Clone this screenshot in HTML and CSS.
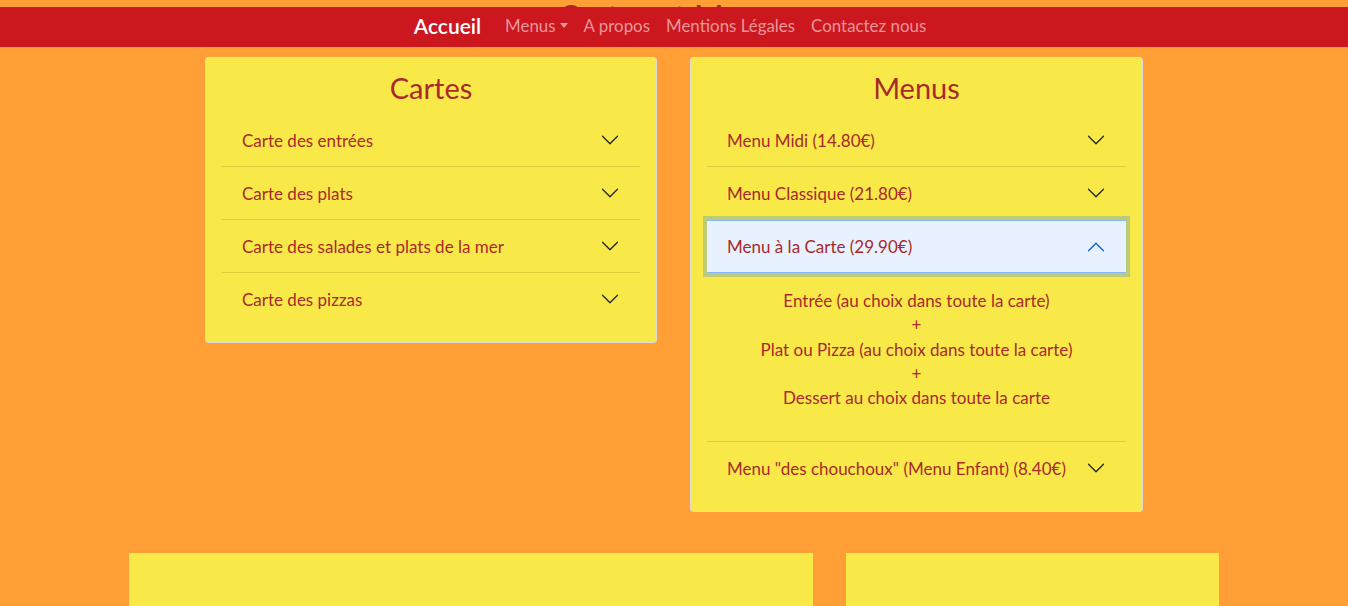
FILE: index.html
```html
<!DOCTYPE html>
<html lang="fr">
<head>
<meta charset="utf-8">
<title>Cartes et Menus</title>
<link rel="stylesheet" href="styles.css">
</head>
<body>
<div class="topstrip"><h1 class="page-title">Cartes et Menus</h1></div>
<nav class="navbar">
  <a class="brand" href="#">Accueil</a>
  <a class="nav-link dropdown" href="#">Menus<span class="caret"></span></a>
  <a class="nav-link" href="#">A propos</a>
  <a class="nav-link" href="#">Mentions Légales</a>
  <a class="nav-link" href="#">Contactez nous</a>
</nav>

<main class="top-row">
  <section class="card">
    <h2 class="card-title">Cartes</h2>
    <div class="accordion">
      <div class="acc-item"><button class="acc-btn"><span>Carte des entrées</span><svg class="chev" viewBox="0 0 16 16"><path fill-rule="evenodd" d="M1.646 4.646a.5.5 0 0 1 .708 0L8 10.293l5.646-5.647a.5.5 0 0 1 .708.708l-6 6a.5.5 0 0 1-.708 0l-6-6a.5.5 0 0 1 0-.708z"/></svg></button></div>
      <div class="acc-item"><button class="acc-btn"><span>Carte des plats</span><svg class="chev" viewBox="0 0 16 16"><path fill-rule="evenodd" d="M1.646 4.646a.5.5 0 0 1 .708 0L8 10.293l5.646-5.647a.5.5 0 0 1 .708.708l-6 6a.5.5 0 0 1-.708 0l-6-6a.5.5 0 0 1 0-.708z"/></svg></button></div>
      <div class="acc-item"><button class="acc-btn"><span>Carte des salades et plats de la mer</span><svg class="chev" viewBox="0 0 16 16"><path fill-rule="evenodd" d="M1.646 4.646a.5.5 0 0 1 .708 0L8 10.293l5.646-5.647a.5.5 0 0 1 .708.708l-6 6a.5.5 0 0 1-.708 0l-6-6a.5.5 0 0 1 0-.708z"/></svg></button></div>
      <div class="acc-item last"><button class="acc-btn"><span>Carte des pizzas</span><svg class="chev" viewBox="0 0 16 16"><path fill-rule="evenodd" d="M1.646 4.646a.5.5 0 0 1 .708 0L8 10.293l5.646-5.647a.5.5 0 0 1 .708.708l-6 6a.5.5 0 0 1-.708 0l-6-6a.5.5 0 0 1 0-.708z"/></svg></button></div>
    </div>
  </section>

  <section class="card">
    <h2 class="card-title">Menus</h2>
    <div class="accordion">
      <div class="acc-item"><button class="acc-btn"><span>Menu Midi (14.80€)</span><svg class="chev" viewBox="0 0 16 16"><path fill-rule="evenodd" d="M1.646 4.646a.5.5 0 0 1 .708 0L8 10.293l5.646-5.647a.5.5 0 0 1 .708.708l-6 6a.5.5 0 0 1-.708 0l-6-6a.5.5 0 0 1 0-.708z"/></svg></button></div>
      <div class="acc-item"><button class="acc-btn"><span>Menu Classique (21.80€)</span><svg class="chev" viewBox="0 0 16 16"><path fill-rule="evenodd" d="M1.646 4.646a.5.5 0 0 1 .708 0L8 10.293l5.646-5.647a.5.5 0 0 1 .708.708l-6 6a.5.5 0 0 1-.708 0l-6-6a.5.5 0 0 1 0-.708z"/></svg></button></div>
      <div class="acc-item open">
        <button class="acc-btn active"><span>Menu à la Carte (29.90€)</span><svg class="chev up" viewBox="0 0 16 16"><path fill-rule="evenodd" d="M1.646 4.646a.5.5 0 0 1 .708 0L8 10.293l5.646-5.647a.5.5 0 0 1 .708.708l-6 6a.5.5 0 0 1-.708 0l-6-6a.5.5 0 0 1 0-.708z"/></svg></button>
        <div class="acc-body">
          <p>Entrée (au choix dans toute la carte)<br>+<br>Plat ou Pizza (au choix dans toute la carte)<br>+<br>Dessert au choix dans toute la carte</p>
        </div>
      </div>
      <div class="acc-item last"><button class="acc-btn"><span>Menu "des chouchoux" (Menu Enfant) (8.40€)</span><svg class="chev" viewBox="0 0 16 16"><path fill-rule="evenodd" d="M1.646 4.646a.5.5 0 0 1 .708 0L8 10.293l5.646-5.647a.5.5 0 0 1 .708.708l-6 6a.5.5 0 0 1-.708 0l-6-6a.5.5 0 0 1 0-.708z"/></svg></button></div>
    </div>
  </section>
</main>

<div class="bottom-row">
  <section class="panel"></section>
  <section class="panel side"><h3 class="panel-title">Horaires</h3></section>
</div>
</body>
</html>
```

FILE: styles.css
```css
* { box-sizing: border-box; }

html, body {
  margin: 0;
  padding: 0;
}

body {
  background: #ff9f35;
  font-family: Lato, "Open Sans", sans-serif;
  color: #a9292b;
  overflow: hidden;
}

.topstrip {
  height: 7px;
  overflow: hidden;
  display: flex;
  justify-content: center;
}

.page-title {
  margin: 0;
  font-size: 32px;
  line-height: 34px;
  font-weight: 400;
  color: #a9292b;
}

.navbar {
  height: 40px;
  background: #cd171f;
  display: flex;
  align-items: center;
  justify-content: center;
  padding: 0 0 3px 0;
}

.navbar a {
  text-decoration: none;
}

.brand {
  color: #ffffff;
  font-size: 21px;
  font-weight: 600;
  margin-right: 16px;
}

.nav-link {
  color: #e8969a;
  font-size: 16.9px;
  padding: 0 8px;
}

.dropdown {
  display: inline-flex;
  align-items: center;
}

.caret {
  display: inline-block;
  margin-left: 4px;
  border-left: 4px solid transparent;
  border-right: 4px solid transparent;
  border-top: 5px solid #e8969a;
}

.top-row {
  display: grid;
  grid-template-columns: 452px 453px;
  column-gap: 33px;
  justify-content: center;
  align-items: start;
  margin-top: 10px;
}

.card {
  background: #f8e949;
  border: 1px solid #dcdcd2;
  border-top-color: #f3eba0;
  border-radius: 4px;
  padding: 13px 16px 17px;
}

.card-title {
  margin: 0 0 9px;
  text-align: center;
  font-size: 29px;
  line-height: 34px;
  font-weight: 400;
  color: #a9292b;
}

.accordion {
  display: flex;
  flex-direction: column;
}

.acc-item {
  border-bottom: 1px solid #dccd3f;
}

.acc-item.last {
  border-bottom: none;
}

.acc-btn {
  width: 100%;
  height: 52px;
  display: flex;
  align-items: center;
  justify-content: space-between;
  padding: 0 20px;
  background: transparent;
  border: none;
  font-family: Lato, "Open Sans", sans-serif;
  font-size: 17px;
  color: #a9292b;
  text-align: left;
  cursor: pointer;
}

.acc-btn.active {
  background: #e7f1ff;
  border-top: 1px solid #86b7fe;
  border-bottom: 1px solid #86b7fe;
  box-shadow: 0 0 0 4px #bdca76;
  height: 53px;
  position: relative;
}

.chev {
  width: 20px;
  height: 20px;
  flex: none;
  fill: #212529;
}

.chev.up {
  fill: #0c63e4;
  transform: rotate(180deg);
}

.acc-body {
  padding: 16px 20px 15px;
  text-align: center;
}

.acc-body p {
  margin: 0 0 16px;
  font-size: 17px;
  line-height: 24.3px;
}

.bottom-row {
  display: grid;
  grid-template-columns: 684px 373px;
  column-gap: 33px;
  justify-content: center;
  margin-top: 41px;
}

.panel {
  background: #f8e949;
  height: 220px;
}

.panel.side {
  padding: 50px 0 0 56px;
}

.panel-title {
  margin: 0;
  font-size: 28px;
  font-weight: 400;
  color: #a9292b;
}
```
